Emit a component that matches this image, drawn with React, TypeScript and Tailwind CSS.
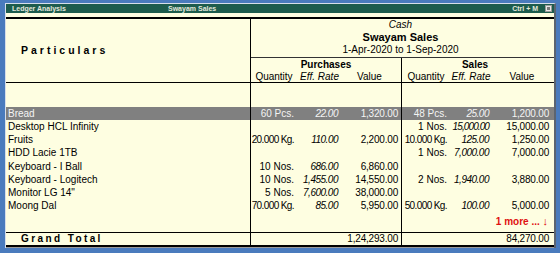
import React from 'react';

type Item = {
  name: string;
  pq?: string;
  pr?: string;
  pv?: string;
  sq?: string;
  sr?: string;
  sv?: string;
  hl?: boolean;
};

const ITEMS: Item[] = [
  { name: 'Bread', pq: '60 Pcs.', pr: '22.00', pv: '1,320.00', sq: '48 Pcs.', sr: '25.00', sv: '1,200.00', hl: true },
  { name: 'Desktop HCL Infinity', sq: '1 Nos.', sr: '15,000.00', sv: '15,000.00' },
  { name: 'Fruits', pq: '20.000 Kg.', pr: '110.00', pv: '2,200.00', sq: '10.000 Kg.', sr: '125.00', sv: '1,250.00' },
  { name: 'HDD Lacie 1TB', sq: '1 Nos.', sr: '7,000.00', sv: '7,000.00' },
  { name: 'Keyboard - I Ball', pq: '10 Nos.', pr: '686.00', pv: '6,860.00' },
  { name: 'Keyboard - Logitech', pq: '10 Nos.', pr: '1,455.00', pv: '14,550.00', sq: '2 Nos.', sr: '1,940.00', sv: '3,880.00' },
  { name: 'Monitor LG 14"', pq: '5 Nos.', pr: '7,600.00', pv: '38,000.00' },
  { name: 'Moong Dal', pq: '70.000 Kg.', pr: '85.00', pv: '5,950.00', sq: '50.000 Kg.', sr: '100.00', sv: '5,000.00' },
];

// long quantities / rates are squeezed a little, like Tally does
const qtyCls = (q?: string) =>
  q && q.length > 8 ? 'tracking-[-0.6px]' : 'tracking-normal';
const rateCls = (r?: string) =>
  r && r.length > 8 ? 'tracking-[-0.9px]' : 'tracking-[-0.5px]';

function ItemRow({ it }: { it: Item }) {
  return (
    <div
      className={`flex h-[13.25px] items-center ${
        it.hl ? 'bg-[#808080] text-[#f4f4f4]' : 'text-black'
      }`}
    >
      <div className="w-[244px] pl-[2px] whitespace-nowrap">{it.name}</div>
      {/* Purchases */}
      <div className="flex h-full w-[151px] items-center border-l border-black">
        <span className={`w-[43px] text-right whitespace-nowrap ${qtyCls(it.pq)}`}>{it.pq}</span>
        <span className={`w-[44px] text-right italic whitespace-nowrap ${rateCls(it.pr)}`}>{it.pr}</span>
        <span className="w-[60px] text-right tracking-[-0.2px] whitespace-nowrap">{it.pv}</span>
      </div>
      {/* Sales */}
      <div className="flex h-full w-[153px] items-center border-l border-black">
        <span className={`w-[45px] text-right whitespace-nowrap ${qtyCls(it.sq)}`}>{it.sq}</span>
        <span className={`w-[42px] text-right italic whitespace-nowrap ${rateCls(it.sr)}`}>{it.sr}</span>
        <span className="w-[60px] text-right tracking-[-0.2px] whitespace-nowrap">{it.sv}</span>
      </div>
    </div>
  );
}

export default function App() {
  return (
    <div className="h-[253px] w-[560px] bg-[#4a7bbd] pt-[3px] pb-[5px] pl-[5px] pr-[4px] font-['Liberation_Sans',Arial,sans-serif] text-[10px] leading-none">
      <div className="flex h-full flex-col border-t border-l border-r-2 border-t-[#d6deea] border-l-[#d6deea] border-r-[#5b6470] bg-[#fefee1]">
        {/* Title bar */}
        <div className="flex h-[9px] shrink-0 items-center bg-[#1d5c4d] pl-[6px] pr-[2px] text-[7px] font-bold text-[#e4e8dc]">
          <span className="w-[156px]">Ledger Analysis</span>
          <span className="flex-1">Swayam Sales</span>
          <span className="mr-[7px]">Ctrl + M</span>
          <span className="flex h-[7px] w-[7px] items-center justify-center border border-[#9a9a9a] bg-[#e8e8e8]">
            <span className="h-[3px] w-[3px] bg-[#7a7a7a]" />
          </span>
        </div>
        <div className="h-[4px] shrink-0" />

        {/* Header */}
        <div className="flex h-[66px] shrink-0 border-t-2 border-b border-black">
          <div className="flex w-[244px] items-center pl-[15px] text-[10.5px] font-bold tracking-[3px]">
            Particulars
          </div>
          <div className="flex w-[304px] flex-col border-l border-black">
            <div className="flex h-[39px] flex-col items-center border-b border-[#333] pr-[4px]">
              <div className="flex h-[12.5px] items-center italic">Cash</div>
              <div className="flex h-[12.5px] items-center text-[11px] font-bold">Swayam Sales</div>
              <div className="flex h-[12.5px] items-center">1-Apr-2020 to 1-Sep-2020</div>
            </div>
            <div className="flex flex-1">
              <div className="flex w-[150px] flex-col">
                <div className="flex h-[13px] items-center justify-center font-bold">Purchases</div>
                <div className="flex h-[11px] items-center">
                  <span className="w-[46px] text-center">Quantity</span>
                  <span className="w-[45px] text-center italic">Eff. Rate</span>
                  <span className="w-[55px] text-center">Value</span>
                </div>
              </div>
              <div className="flex w-[153px] flex-col border-l border-black">
                <div className="flex h-[13px] items-center justify-center pr-[6px] font-bold">Sales</div>
                <div className="flex h-[11px] items-center">
                  <span className="w-[48px] text-center">Quantity</span>
                  <span className="w-[42px] text-center italic">Eff. Rate</span>
                  <span className="w-[60px] text-center">Value</span>
                </div>
              </div>
            </div>
          </div>
        </div>

        {/* Body */}
        <div className="flex h-[149px] shrink-0 flex-col">
          <div className="flex h-[24px]">
            <div className="w-[244px]" />
            <div className="w-[151px] border-l border-black" />
            <div className="w-[153px] border-l border-black" />
          </div>
          {ITEMS.map((it) => (
            <ItemRow key={it.name} it={it} />
          ))}
          <div className="flex flex-1">
            <div className="w-[244px]" />
            <div className="w-[151px] border-l border-black" />
            <div className="flex w-[153px] justify-end border-l border-black pt-[2px] pr-[6px]">
              <span className="flex h-[13px] items-center font-bold text-[#e01010]">
                1 more ...&nbsp;<span className="text-[11px] font-normal">↓</span>
              </span>
            </div>
          </div>
        </div>

        {/* Grand total */}
        <div className="flex h-[15px] shrink-0 border-t border-b-2 border-black">
          <div className="flex w-[244px] items-center pl-[15px] font-bold tracking-[2.4px]">
            Grand Total
          </div>
          <div className="flex w-[151px] items-center justify-end border-l border-black pr-[3px] tracking-[-0.2px]">
            1,24,293.00
          </div>
          <div className="flex w-[153px] items-center justify-end border-l border-black pr-[5px] tracking-[-0.2px]">
            84,270.00
          </div>
        </div>
        <div className="h-[1px] shrink-0 bg-[#9a9a9a]" />
      </div>
    </div>
  );
}
